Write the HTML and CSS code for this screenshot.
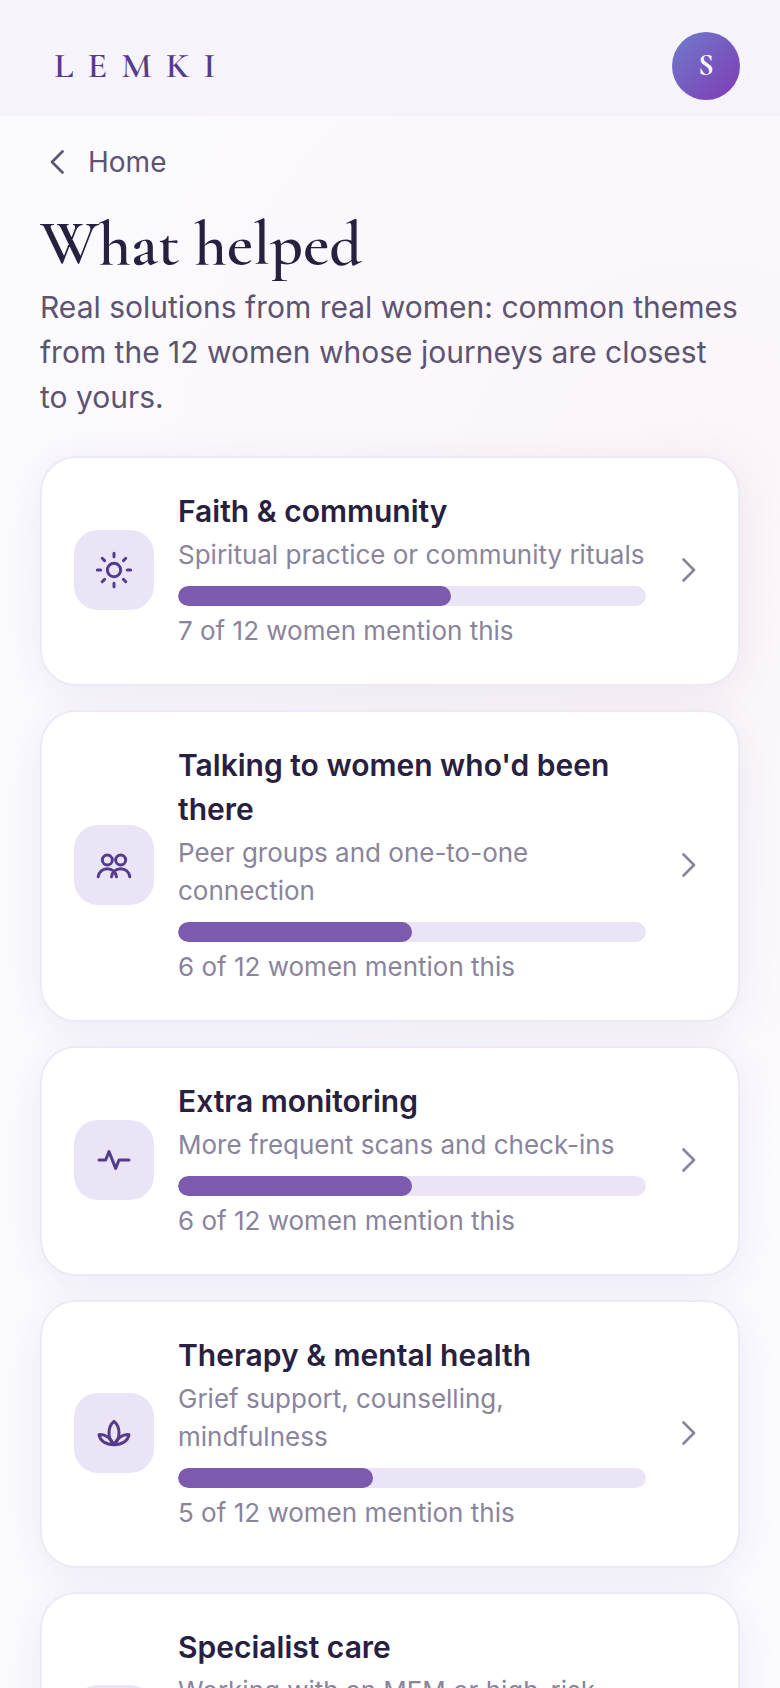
FILE: index.html
```html
<!DOCTYPE html>
<html lang="en">
<head>
<meta charset="utf-8">
<meta name="viewport" content="width=device-width, initial-scale=1">
<title>What helped · Lemki</title>
<link rel="stylesheet" href="styles.css">
</head>
<body>
<div class="app">
  <header class="topbar">
    <a class="logo" href="#">LEMKI</a>
    <button class="avatar" type="button" aria-label="Account">S</button>
  </header>
  <main class="page">
    <a class="back" href="#">
      <svg class="chevron" viewBox="0 0 24 24" aria-hidden="true"><path d="M15 5l-7 7 7 7"/></svg>
      <span>Home</span>
    </a>
    <h1 class="title">What helped</h1>
    <p class="intro">Real solutions from real women: common themes from the 12 women whose journeys are closest to yours.</p>

    <div class="themes">
      <a class="card" href="#">
        <span class="tile"><svg class="icon" viewBox="0 0 24 24" aria-hidden="true"><circle cx="12" cy="12" r="4"/><path d="M12 2v2M12 20v2M2 12h2M20 12h2M4.93 4.93l1.41 1.41M17.66 17.66l1.41 1.41M4.93 19.07l1.41-1.41M17.66 6.34l1.41-1.41"/></svg></span>
        <span class="body">
          <span class="name">Faith &amp; community</span>
          <span class="desc">Spiritual practice or community rituals</span>
          <span class="bar"><span class="fill" style="width:58.33%"></span></span>
          <span class="count">7 of 12 women mention this</span>
        </span>
        <svg class="chevron chevron-next" viewBox="0 0 24 24" aria-hidden="true"><path d="M9 5l7 7-7 7"/></svg>
      </a>

      <a class="card" href="#">
        <span class="tile"><svg class="icon" viewBox="0 0 24 24" aria-hidden="true"><circle cx="8" cy="9" r="3"/><circle cx="16" cy="9" r="3"/><path d="M2.500 19c.5-2.900 2.700-4.800 5.500-4.800s5 1.900 5.500 4.800M10.500 19c.5-2.900 2.700-4.800 5.500-4.800s5 1.900 5.500 4.800"/></svg></span>
        <span class="body">
          <span class="name">Talking to women who'd been there</span>
          <span class="desc">Peer groups and one-to-one connection</span>
          <span class="bar"><span class="fill" style="width:50%"></span></span>
          <span class="count">6 of 12 women mention this</span>
        </span>
        <svg class="chevron chevron-next" viewBox="0 0 24 24" aria-hidden="true"><path d="M9 5l7 7-7 7"/></svg>
      </a>

      <a class="card" href="#">
        <span class="tile"><svg class="icon" viewBox="0 0 24 24" aria-hidden="true"><path d="M3 12h4l2-5 4 10 2-5h6"/></svg></span>
        <span class="body">
          <span class="name">Extra monitoring</span>
          <span class="desc">More frequent scans and check-ins</span>
          <span class="bar"><span class="fill" style="width:50%"></span></span>
          <span class="count">6 of 12 women mention this</span>
        </span>
        <svg class="chevron chevron-next" viewBox="0 0 24 24" aria-hidden="true"><path d="M9 5l7 7-7 7"/></svg>
      </a>

      <a class="card" href="#">
        <span class="tile"><svg class="icon" viewBox="0 0 24 24" aria-hidden="true"><path d="M12 19c-2-1.600-3-4.200-3-7s1-5.400 3-7c2 1.600 3 4.200 3 7s-1 5.400-3 7z"/><path d="M12 19c-5 0-8.400-2.400-9-6 3.600-.4 7.400 2 9 6zM12 19c5 0 8.400-2.400 9-6-3.600-.4-7.400 2-9 6z"/></svg></span>
        <span class="body">
          <span class="name">Therapy &amp; mental health</span>
          <span class="desc">Grief support, counselling, mindfulness</span>
          <span class="bar"><span class="fill" style="width:41.67%"></span></span>
          <span class="count">5 of 12 women mention this</span>
        </span>
        <svg class="chevron chevron-next" viewBox="0 0 24 24" aria-hidden="true"><path d="M9 5l7 7-7 7"/></svg>
      </a>

      <a class="card" href="#">
        <span class="tile"><svg class="icon" viewBox="0 0 24 24" aria-hidden="true"><path d="M12 5v14M5 12h14"/></svg></span>
        <span class="body">
          <span class="name">Specialist care</span>
          <span class="desc">Working with an MFM or high-risk specialist</span>
          <span class="bar"><span class="fill" style="width:33.33%"></span></span>
          <span class="count">4 of 12 women mention this</span>
        </span>
        <svg class="chevron chevron-next" viewBox="0 0 24 24" aria-hidden="true"><path d="M9 5l7 7-7 7"/></svg>
      </a>
    </div>
  </main>
</div>
</body>
</html>
```

FILE: styles.css
```css
:root {
  --ink: #28203f;
  --ink-soft: #5c5470;
  --ink-muted: #8a849c;
  --purple: #553c8b;
  --purple-mid: #7c5aae;
  --lilac: #ebe4f7;
  --serif: "Cormorant Garamond", "Liberation Serif", serif;
  --sans: Inter, "Liberation Sans", sans-serif;
}

* { box-sizing: border-box; }

body {
  margin: 0;
  font-family: var(--sans);
  color: var(--ink);
}

a { color: inherit; text-decoration: none; }

.app {
  height: 100vh;
  overflow-y: auto;
  scrollbar-width: none;
  background:
    radial-gradient(circle at 90% 30%, rgba(251, 244, 248, 0.9), rgba(251, 244, 248, 0) 50%),
    #fbfaff;
}

.topbar {
  display: flex;
  align-items: center;
  justify-content: space-between;
  padding: 32px 40px 16px 54px;
  background: #f6f3fb;
}

.logo {
  font-family: var(--serif);
  font-size: 36px;
  font-weight: 600;
  line-height: 44px;
  letter-spacing: 14px;
  color: var(--purple);
}

.avatar {
  width: 68px;
  height: 68px;
  padding: 0;
  border: 0;
  border-radius: 50%;
  background: linear-gradient(135deg, #6f7ccb, #7f3ab5);
  color: #fff;
  font: bold 30px/1 var(--serif);
}

.page { padding: 24px 40px; }

.back {
  display: inline-flex;
  align-items: center;
  gap: 12px;
  font-size: 28px;
  line-height: 44px;
  color: var(--ink-soft);
}

.chevron {
  flex: none;
  width: 36px;
  height: 36px;
  fill: none;
  stroke: currentColor;
  stroke-width: 1.8;
  stroke-linecap: round;
  stroke-linejoin: round;
}

.chevron-next { color: var(--ink-muted); }

.title {
  margin: 27px 0 8px;
  font-family: var(--serif);
  font-size: 64px;
  font-weight: 600;
  line-height: 66px;
}

.intro {
  margin: 0 0 36px;
  font-size: 30px;
  line-height: 45px;
  color: var(--ink-soft);
}

.themes {
  display: flex;
  flex-direction: column;
  gap: 24px;
}

.card {
  display: flex;
  align-items: center;
  gap: 24px;
  padding: 31px 32px 34px;
  border: 2px solid #eee9f5;
  border-radius: 36px;
  background: #fff;
  box-shadow: 0 8px 40px rgba(75, 50, 120, 0.08);
}

.tile {
  display: flex;
  flex: none;
  align-items: center;
  justify-content: center;
  width: 80px;
  height: 80px;
  border-radius: 24px;
  background: var(--lilac);
}

.icon {
  width: 40px;
  height: 40px;
  fill: none;
  stroke: var(--purple);
  stroke-width: 1.8;
  stroke-linecap: round;
  stroke-linejoin: round;
}

.body {
  display: flex;
  flex: 1;
  flex-direction: column;
  min-width: 0;
}

.name {
  font-size: 30px;
  font-weight: 600;
  line-height: 44px;
}

.desc {
  margin: 3px 0 12px;
  font-size: 26px;
  line-height: 38px;
  color: var(--ink-muted);
}

.bar {
  height: 20px;
  margin-bottom: 6px;
  overflow: hidden;
  border-radius: 10px;
  background: var(--lilac);
}

.fill {
  display: block;
  height: 100%;
  border-radius: 10px;
  background: var(--purple-mid);
}

.count {
  font-size: 26px;
  line-height: 38px;
  color: var(--ink-muted);
}
```
